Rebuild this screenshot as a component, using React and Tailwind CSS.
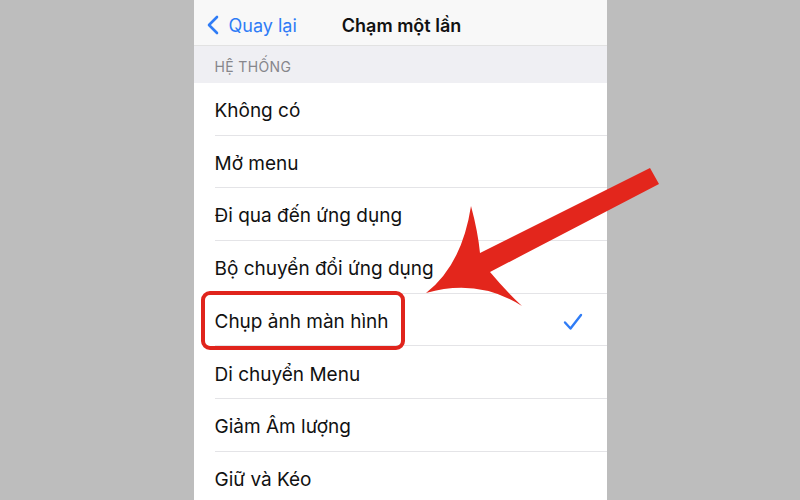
import React from "react";

const options = [
  "Không có",
  "Mở menu",
  "Đi qua đến ứng dụng",
  "Bộ chuyển đổi ứng dụng",
  "Chụp ảnh màn hình",
  "Di chuyển Menu",
  "Giảm Âm lượng",
  "Giữ và Kéo",
];

const Row = ({ label, checked }) => (
  <div className="flex h-[52.7px] items-center pl-[21px]">
    <div className="flex h-full flex-1 items-center justify-between border-b border-[#e4e4e7] pr-[24px] pt-[5px]">
      <span className="text-[19px] text-[#111]">{label}</span>
      {checked && (
        <svg width="20" height="18" viewBox="0 0 20 18">
          <path
            d="M2 9.5 L7.5 15.5 L18 2"
            fill="none"
            stroke="#2f7cf6"
            strokeWidth="2.4"
            strokeLinecap="round"
            strokeLinejoin="round"
          />
        </svg>
      )}
    </div>
  </div>
);

export default function App() {
  return (
    <div
      className="relative h-[500px] w-[800px] overflow-hidden bg-[#bdbdbd]"
      style={{ fontFamily: "Inter, 'Noto Sans', sans-serif" }}
    >
      <div className="mx-auto h-full w-[413px] bg-white">
        {/* nav bar */}
        <div className="relative flex h-[46px] items-center border-b border-[#e2e2e2] bg-[#f8f8f8] pt-[5px]">
          <div className="flex items-center pl-[13px] text-[#2f7cf6]">
            <svg width="12" height="20" viewBox="0 0 12 20">
              <path
                d="M10 2 L2 10 L10 18"
                fill="none"
                stroke="#2f7cf6"
                strokeWidth="2.6"
                strokeLinecap="round"
                strokeLinejoin="round"
              />
            </svg>
            <span className="ml-[10px] text-[18px]">Quay lại</span>
          </div>
          <span className="ml-[45px] text-[18px] font-semibold text-[#111]">
            Chạm một lần
          </span>
        </div>

        {/* section header */}
        <div className="flex h-[37px] items-center bg-[#efeff3] pl-[21px] pt-[4px] text-[14px] tracking-wide text-[#86868b]">
          HỆ THỐNG
        </div>

        {options.map((o) => (
          <Row key={o} label={o} checked={o === "Chụp ảnh màn hình"} />
        ))}
      </div>

      {/* red highlight box */}
      <div className="absolute left-[201px] top-[291px] h-[59px] w-[204px] rounded-[9px] border-[4px] border-[#e0241c]" />

      {/* red arrow */}
      <svg className="absolute left-0 top-0" width="800" height="500" viewBox="0 0 800 500">
        <path
          d="M650 168 L659 184 L490 272 Q505 290 522 306 Q478 278 426 293 Q462 265 471 206 Q478 232 480 253 Z"
          fill="#e3261c"
        />
      </svg>
    </div>
  );
}
